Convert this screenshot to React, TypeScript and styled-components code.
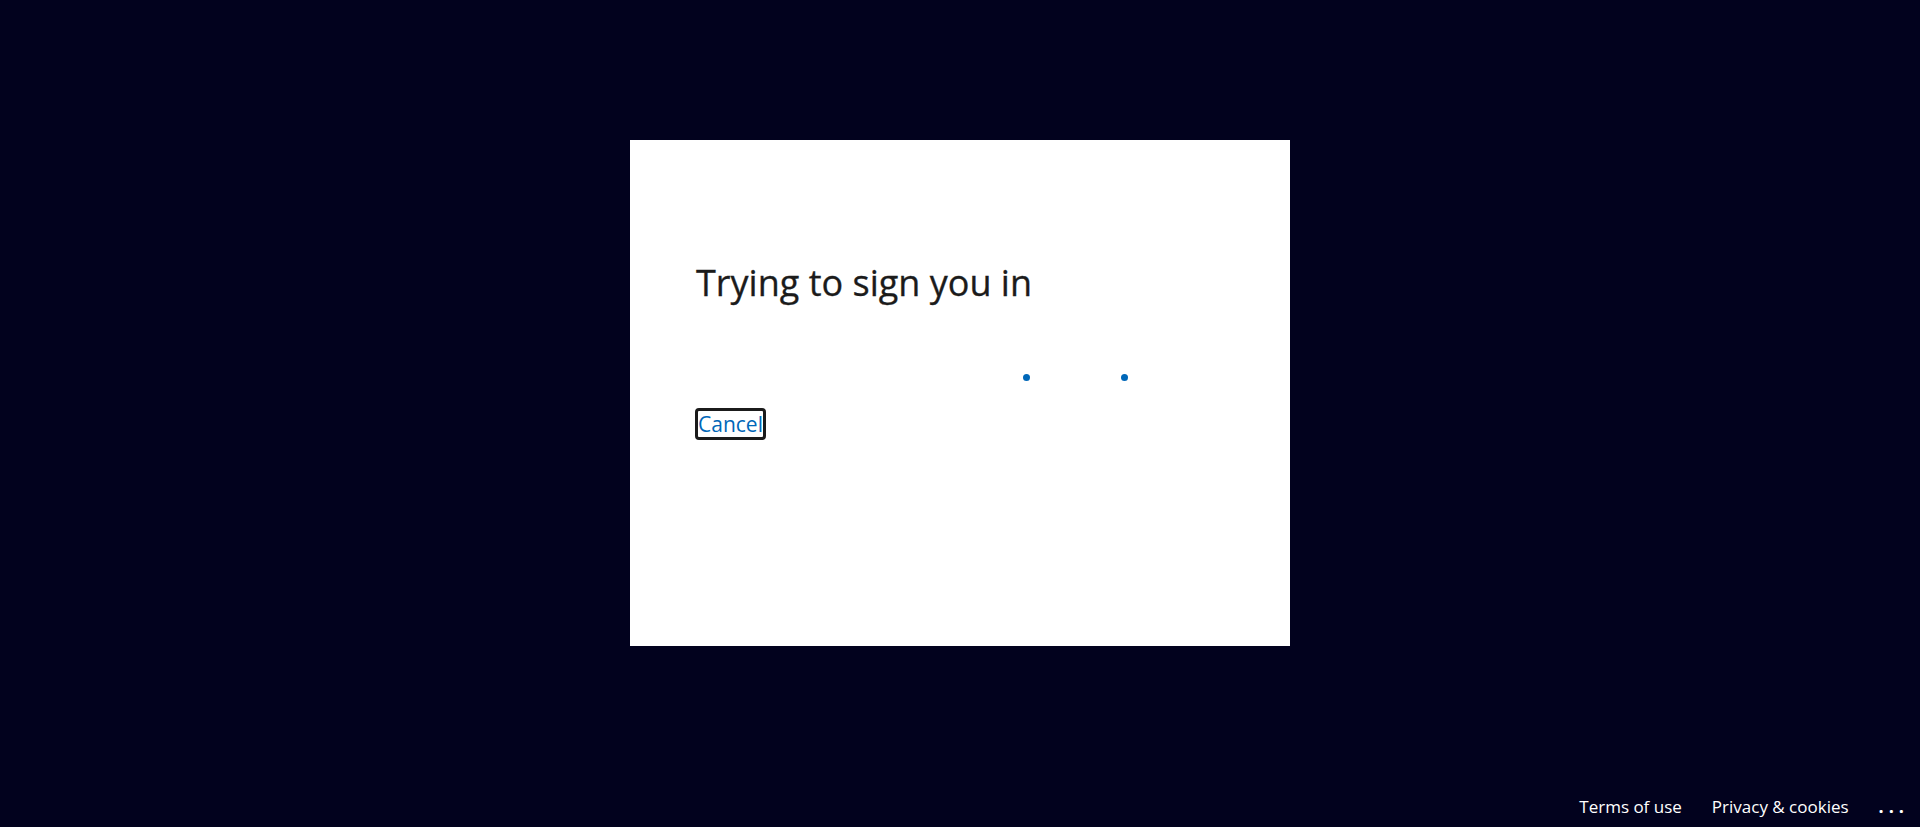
import React from "react";
import styled, { createGlobalStyle } from "styled-components";

const GlobalStyle = createGlobalStyle`
  html, body {
    margin: 0;
    padding: 0;
    height: 100%;
  }
  body {
    background: #02021e;
    font-family: "Segoe UI", "Open Sans", "Noto Sans", sans-serif;
  }
  #root {
    height: 100%;
  }
`;

const Page = styled.div`
  display: flex;
  flex-direction: column;
  height: 827px;
  background: #02021e;
`;

const Main = styled.main`
  flex: 1;
  display: flex;
  align-items: center;
  justify-content: center;
`;

const Card = styled.section`
  box-sizing: border-box;
  width: 660px;
  min-height: 506px;
  background: #ffffff;
  padding: 122px 66px 66px;
  display: flex;
  flex-direction: column;
`;

const Title = styled.h1`
  margin: 0;
  font-size: 36px;
  line-height: 42px;
  font-weight: 400;
  color: #1b1b1b;
  -webkit-text-stroke: 0.3px #1b1b1b;
`;

const Progress = styled.div`
  display: flex;
  align-items: center;
  gap: 91px;
  height: 8px;
  margin-top: 70px;
  padding-left: 327px;
`;

const Dot = styled.span`
  width: 7px;
  height: 7px;
  border-radius: 50%;
  background: #0067b8;
`;

const Actions = styled.div`
  margin-top: 26px;
  display: flex;
`;

const CancelLink = styled.a`
  display: inline-block;
  font-size: 21px;
  line-height: 26px;
  color: #0067b8;
  text-decoration: none;
  border: 3px solid #1b1b1b;
  border-radius: 4px;
  padding: 0;
  margin-left: -1px;
  cursor: pointer;
`;

const Footer = styled.footer`
  height: 42px;
  display: flex;
  align-items: center;
  justify-content: flex-end;
  gap: 30px;
  padding-right: 16px;
`;

const FooterLink = styled.a`
  font-size: 17px;
  color: #ffffff;
  text-decoration: none;
`;

const More = styled.span`
  font-size: 18px;
  font-weight: 700;
  color: #ffffff;
  letter-spacing: 5px;
  margin-right: -5px;
`;

export default function App() {
  return (
    <Page>
      <GlobalStyle />
      <Main>
        <Card>
          <Title>Trying to sign you in</Title>
          <Progress>
            <Dot />
            <Dot />
          </Progress>
          <Actions>
            <CancelLink>Cancel</CancelLink>
          </Actions>
        </Card>
      </Main>
      <Footer>
        <FooterLink>Terms of use</FooterLink>
        <FooterLink>Privacy &amp; cookies</FooterLink>
        <More>...</More>
      </Footer>
    </Page>
  );
}
